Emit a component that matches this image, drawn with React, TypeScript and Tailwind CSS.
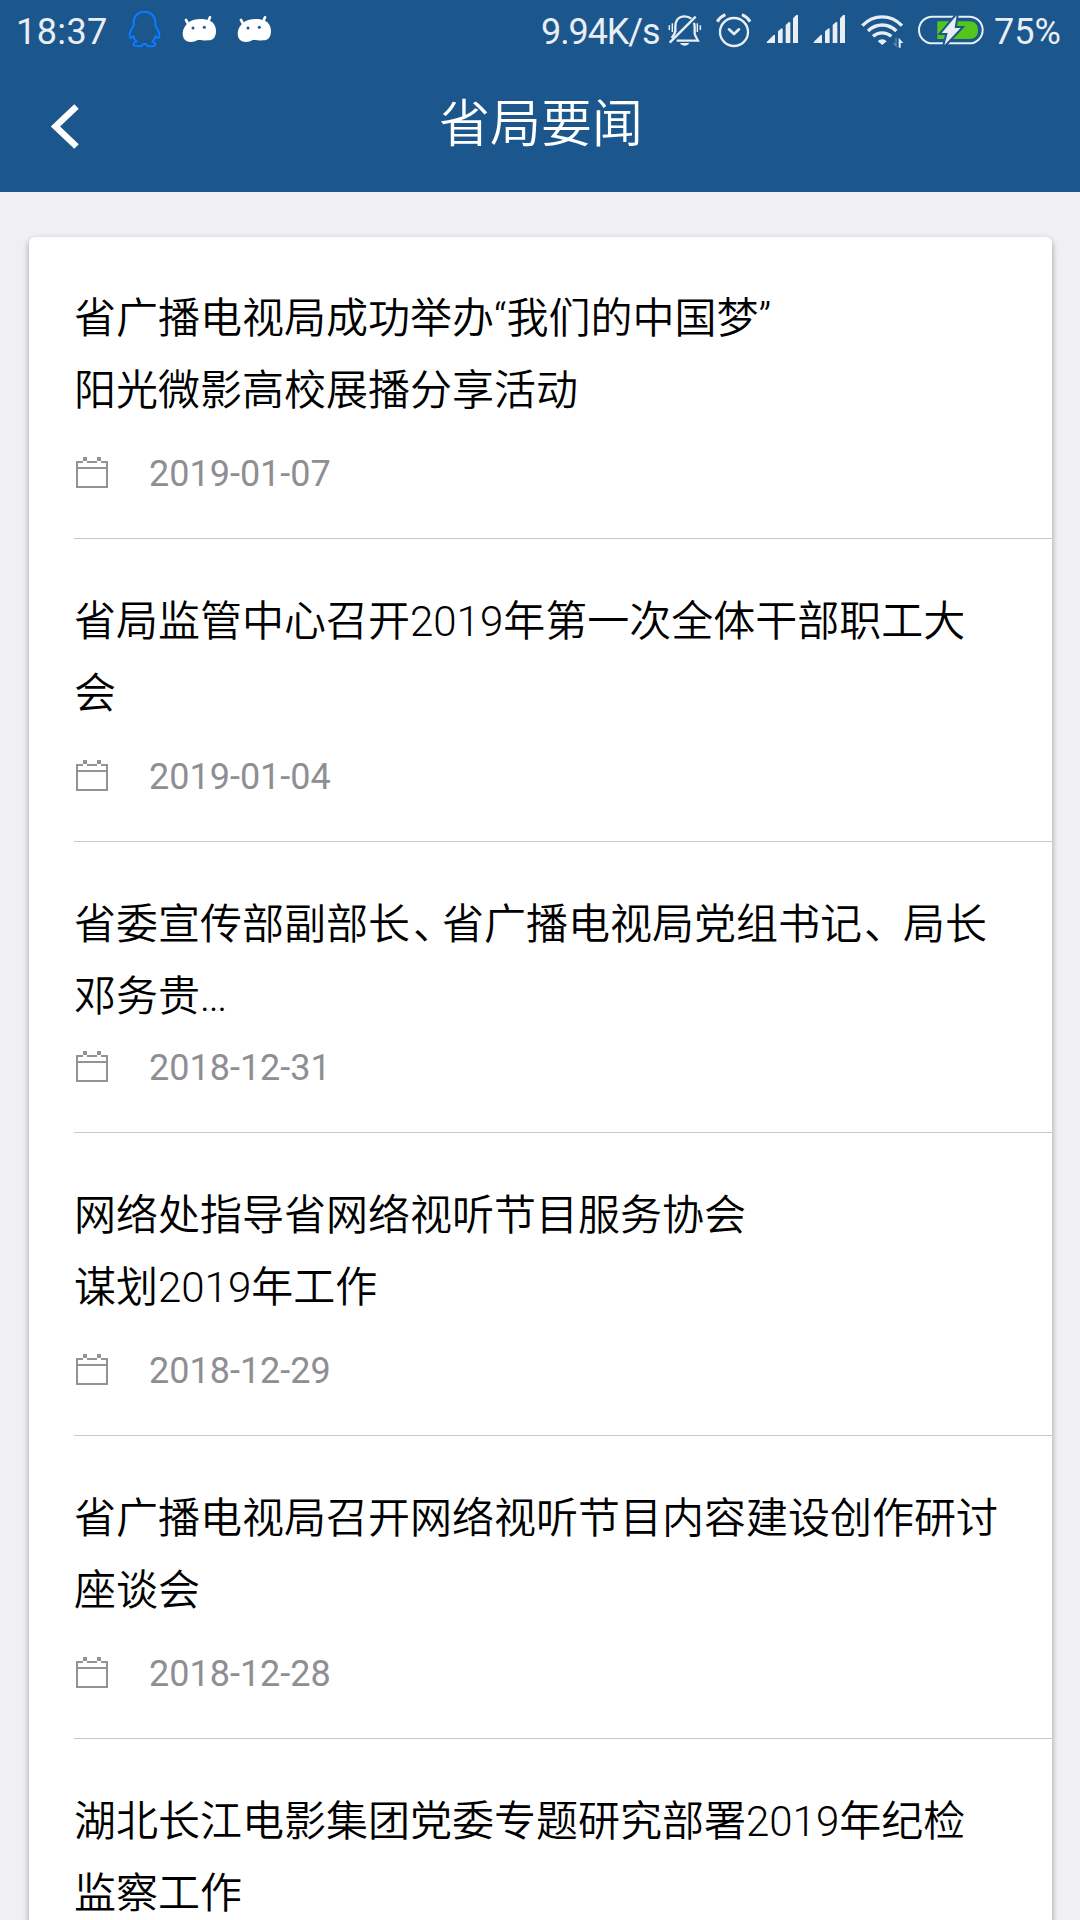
import React from 'react';

interface NewsItem {
  id: number;
  lines: React.ReactNode[];
  date?: string;
  clipped?: boolean;
}

const newsItems: NewsItem[] = [
  { id: 1, lines: ['省广播电视局成功举办“我们的中国梦”', '阳光微影高校展播分享活动'], date: '2019-01-07' },
  { id: 2, lines: ['省局监管中心召开2019年第一次全体干部职工大', '会'], date: '2019-01-04' },
  {
    id: 3,
    lines: [
      <>
        省委宣传部副部长<span className="ml-[3px] tracking-[-13px]">、</span>省广播电视局党组书记
        <span className="ml-[2px] tracking-[-3px]">、</span>局长
      </>,
      <>
        邓务贵<span className="tracking-[-1.4px]">...</span>
      </>,
    ],
    date: '2018-12-31',
    clipped: true,
  },
  { id: 4, lines: ['网络处指导省网络视听节目服务协会', '谋划2019年工作'], date: '2018-12-29' },
  { id: 5, lines: ['省广播电视局召开网络视听节目内容建设创作研讨', '座谈会'], date: '2018-12-28' },
  { id: 6, lines: ['湖北长江电影集团党委专题研究部署2019年纪检', '监察工作'] },
];

const QQIcon = () => (
  <svg className="h-16 w-[34px]" viewBox="384 0 102 192" fill="none" stroke="#0a7cff" strokeWidth="6" strokeLinejoin="round">
    <path d="M433 35C414 35 401 49 401 66C401 72 402 74 400 79C394 87 389 96 389 106C389 112 391 115 394 114C397 112 399 109 400 108C402 115 405 120 410 125C404 127 400 130 400 134C401 139 409 139 416 139C424 139 428 136 429 132H438C439 136 443 139 451 139C458 139 466 139 466 134C466 130 462 127 457 125C462 120 465 115 467 108C469 110 470 113 473 114C476 115 478 112 478 106C478 96 473 87 467 79C465 74 466 72 466 66C466 49 452 35 433 35Z" />
  </svg>
);

const AndroidIcon = () => (
  <svg className="h-16 w-[35px]" viewBox="546 0 105 192">
    <path d="M558 60L564 71M630 52L624 66" stroke="#fff" strokeWidth="8" strokeLinecap="round" />
    <path
      fill="#fff"
      d="M566 67C576 60 588 57 601 57C613 57 622 59 630 62C642 68 648 79 648 93C648 111 640 121 625 121C612 122 601 119 593 120C585 126 571 127 561 124C552 120 548 112 548 99C549 86 556 75 566 67Z"
    />
    <circle cx="579" cy="84" r="4.5" fill="#1b568d" />
    <circle cx="613" cy="82" r="4.5" fill="#1b568d" />
  </svg>
);

const MuteIcon = () => (
  <svg className="h-16 w-[38px]" viewBox="408 0 114 192" fill="none" stroke="#e8eef4" strokeWidth="7">
    <path d="M419 128L497 50" />
    <path d="M436 96V80C436 60 447 49 464 49C472 49 479 52 484 56" />
    <path d="M492 68C493 72 494 76 494 81V101C495 108 500 114 504 122H440" />
    <path d="M436 94C434 102 430 108 425 114" />
    <path d="M418 76V90M427 70V96M502 70V96M511 76V90" strokeWidth="4.5" />
    <path d="M450 129H478C475 135 470 137 464 137C458 137 453 135 450 129Z" fill="#e8eef4" stroke="none" />
  </svg>
);

const AlarmIcon = () => (
  <svg className="h-16 w-[39px]" viewBox="552 0 117 192" fill="none" stroke="#e8eef4" strokeWidth="7">
    <circle cx="612" cy="96" r="42" />
    <path d="M597 88L612 102L627 88" strokeWidth="8" strokeLinecap="round" strokeLinejoin="round" />
    <path d="M562 65C567 56 575 49 586 44M660 65C655 56 647 49 636 44" strokeWidth="9" />
  </svg>
);

const SignalIcon = () => (
  <svg className="h-16 w-[35px]" viewBox="705 0 105 192" fill="#e8eef4">
    <path d="M710 129V126L731 105Q735 102 735 107V129Z" />
    <path d="M744 129V94L753 86Q758 83 758 88V129Z" />
    <path d="M767 129V75L776 67Q781 64 781 69V129Z" />
    <path d="M789 129V55L798 46Q804 42 804 48V129Z" />
  </svg>
);

const WifiIcon = () => (
  <svg className="h-16 w-[46px]" viewBox="180 0 138 192" fill="none" stroke="#e8eef4" strokeWidth="10">
    <path d="M187 77C221 42 272 42 306 77" />
    <path d="M204 93C229 69 264 69 289 93" />
    <path d="M219 109C235 95 258 95 274 109" />
    <path d="M233 124C240 116 253 116 260 124L247 135Z" fill="#e8eef4" stroke="none" />
    <path d="M290 113V143L278 130H286V113Z" fill="#5b86ae" stroke="none" />
    <path d="M296 143V113L310 129H302V143Z" fill="#e8eef4" stroke="none" />
  </svg>
);

const BatteryIcon = () => (
  <svg className="h-16 w-[70px]" viewBox="348 0 210 192">
    <rect x="357" y="50" width="191" height="80" rx="40" fill="none" stroke="#e8eef4" strokeWidth="6" />
    <path d="M412 64H510C526 64 534 76 534 91C534 106 526 117 510 117H412Z" fill="#53c51c" />
    <path
      d="M470 46L425 99H443L433 136L482 84H464Z"
      fill="#e8eef4"
      stroke="#1b568d"
      strokeWidth="12"
      strokeLinejoin="miter"
      paintOrder="stroke"
    />
  </svg>
);

const CalendarIcon = () => (
  <svg className="-mt-1 h-8 w-8" viewBox="0 0 32 32" fill="#929297" shapeRendering="crispEdges">
    <path d="M0 5H7V7H2V11H30V7H25V5H32V32H0ZM2 13V30H30V13Z" fillRule="evenodd" />
    <path d="M7 1H11V5H7ZM21 1H25V5H21ZM11 5H21V7H11Z" />
  </svg>
);

const StatusBar = () => (
  <div className="flex h-16 overflow-hidden text-[36px] leading-[64px] whitespace-nowrap text-[#e8eef4]">
    <span className="w-32 pl-4 tracking-[0.4px]">18:37</span>
    <QQIcon />
    <div className="ml-5 flex gap-5">
      <AndroidIcon />
      <AndroidIcon />
    </div>
    <div className="ml-auto flex">
      <span className="w-[125px] tracking-[-1.1px]">9.94K/s</span>
      <MuteIcon />
      <div className="ml-2.5 flex gap-3">
        <AlarmIcon />
        <SignalIcon />
        <SignalIcon />
      </div>
      <div className="ml-[13px] flex gap-2.5">
        <WifiIcon />
        <BatteryIcon />
      </div>
      <span className="ml-2 w-[86px]">75%</span>
    </div>
  </div>
);

const TitleBar = () => (
  <div className="grid h-32 grid-cols-[130px_1fr_130px] items-start">
    <button className="pt-[38px] pl-[50px]" aria-label="返回">
      <svg className="h-[50px] w-[30px]" viewBox="0 0 30 50" fill="none" stroke="#fff" strokeWidth="6.5">
        <path d="M26.5 4.5L5.5 24.5L26.5 44.5" />
      </svg>
    </button>
    <h1 className="pt-[25px] pl-[2px] text-center text-[51px] leading-[72px] font-[350] text-white">省局要闻</h1>
  </div>
);

const NewsRow: React.FC<{ item: NewsItem }> = ({ item }) => (
  <li className="ml-[45px] border-b border-[#c8c7cc] pt-[47px] first:pt-[46px]">
    <h2 className="text-[42px] leading-[72px] font-[350] whitespace-nowrap text-black">
      {item.lines.map((line, index) => (
        <span key={index} className="block">
          {line}
        </span>
      ))}
    </h2>
    {item.date && (
      <div className={`flex items-center gap-[41px] pb-[42px] pl-[2px] ${item.clipped ? 'pt-[13px]' : 'pt-[25px]'}`}>
        <CalendarIcon />
        <time className="h-[44px] text-[36px] leading-[44px] text-[#8e8e93]">{item.date}</time>
      </div>
    )}
  </li>
);

const App: React.FC = () => (
  <div className="h-[1920px] w-[1080px] overflow-hidden bg-[#efeff4] font-[Roboto,'Noto_Sans_CJK_SC',sans-serif]">
    <header className="h-48 bg-[#1b568d]">
      <StatusBar />
      <TitleBar />
    </header>
    <ul className="mt-[45px] mr-7 ml-[29px] rounded-md bg-white shadow-[0_3px_6px_rgba(0,0,0,0.35)]">
      {newsItems.map((item) => (
        <NewsRow key={item.id} item={item} />
      ))}
    </ul>
  </div>
);

export default App;
